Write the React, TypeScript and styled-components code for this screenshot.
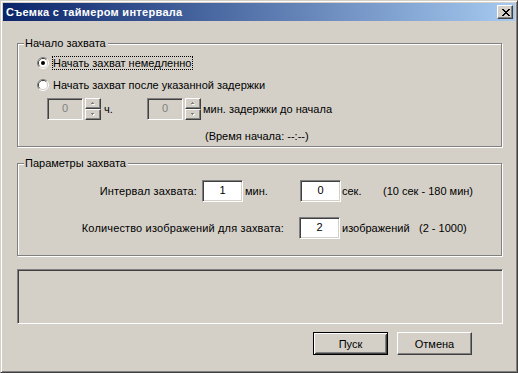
import styled, { createGlobalStyle, css } from 'styled-components';

const GlobalStyle = createGlobalStyle`
    html, body {
        margin: 0;
        padding: 0;
        background: #d4d0c8;
    }
    body {
        font-family: 'Liberation Sans', Arial, sans-serif;
        font-size: 11px;
        color: #000;
    }
`;

// classic 3D edges
const raised = css`
    border: 1px solid;
    border-color: #fff #404040 #404040 #fff;
    box-shadow: inset -1px -1px 0 #808080, inset 1px 1px 0 #d4d0c8;
`;

const sunken = css`
    border: 1px solid;
    border-color: #808080 #fff #fff #808080;
    box-shadow: inset 1px 1px 0 #404040, inset -1px -1px 0 #d4d0c8;
`;

export default function App() {
    return (
        <>
            <GlobalStyle />
            <Window>
                <TitleBar>
                    <Title>Съемка с таймером интервала</Title>
                    <CloseButton aria-label="close">
                        <svg width="8" height="7" viewBox="0 0 8 7">
                            <path
                                d="M0 0h2v1h-2zM6 0h2v1h-2zM1 1h2v1h-2zM5 1h2v1h-2zM2 2h4v1h-4zM3 3h2v1h-2zM2 4h4v1h-4zM1 5h2v1h-2zM5 5h2v1h-2zM0 6h2v1h-2zM6 6h2v1h-2z"
                                fill="#000"
                            />
                        </svg>
                    </CloseButton>
                </TitleBar>

                <Body>
                    <GroupBox $height={104} $padTop={12} $padLeft={19}>
                        <Caption>Начало захвата</Caption>
                        <RadioRow>
                            <Radio checked />
                            <RadioLabel $focused>Начать захват немедленно</RadioLabel>
                        </RadioRow>
                        <RadioRow $top={8}>
                            <Radio />
                            <RadioLabel>Начать захват после указанной задержки</RadioLabel>
                        </RadioRow>
                        <SpinRow>
                            <DisabledEdit>0</DisabledEdit>
                            <SpinButtons />
                            <UnitLabel $width={46} $pad={3}>
                                ч.
                            </UnitLabel>
                            <DisabledEdit>0</DisabledEdit>
                            <SpinButtons />
                            <UnitLabel $pad={2}>мин. задержки до начала</UnitLabel>
                        </SpinRow>
                        <StartTime>(Время начала: --:--)</StartTime>
                    </GroupBox>

                    <GroupBox $height={93} $padTop={16} $top={16}>
                        <Caption>Параметры захвата</Caption>
                        <ParamRow>
                            <FieldLabel $width={184} $gap={5}>
                                Интервал захвата:
                            </FieldLabel>
                            <NumberEdit>1</NumberEdit>
                            <UnitLabel $width={57} $pad={2}>
                                мин.
                            </UnitLabel>
                            <NumberEdit>0</NumberEdit>
                            <UnitLabel $width={42} $pad={1}>
                                сек.
                            </UnitLabel>
                            <UnitLabel>(10 сек - 180 мин)</UnitLabel>
                        </ParamRow>
                        <ParamRow $top={15}>
                            <FieldLabel $width={281} $gap={15}>
                                Количество изображений для захвата:
                            </FieldLabel>
                            <NumberEdit>2</NumberEdit>
                            <UnitLabel $width={79} $pad={2}>
                                изображений
                            </UnitLabel>
                            <UnitLabel>(2 - 1000)</UnitLabel>
                        </ParamRow>
                    </GroupBox>

                    <StatusPanel />

                    <ButtonRow>
                        <PushButton $default>Пуск</PushButton>
                        <PushButton>Отмена</PushButton>
                    </ButtonRow>
                </Body>
            </Window>
        </>
    );
}

function Radio({ checked }: { checked?: boolean }) {
    return (
        <RadioSvg width="12" height="12" viewBox="0 0 12 12">
            <path d="M2.11 9.89 A5.5 5.5 0 0 1 9.89 2.11" stroke="#808080" fill="none" />
            <path d="M9.89 2.11 A5.5 5.5 0 0 1 2.11 9.89" stroke="#fff" fill="none" />
            <path d="M2.82 9.18 A4.5 4.5 0 0 1 9.18 2.82" stroke="#404040" fill="none" />
            <path d="M9.18 2.82 A4.5 4.5 0 0 1 2.82 9.18" stroke="#d4d0c8" fill="none" />
            <circle cx="6" cy="6" r="4" fill="#fff" />
            {checked && <circle cx="6" cy="6" r="2" fill="#000" />}
        </RadioSvg>
    );
}

function SpinButtons() {
    return (
        <SpinStack>
            <SpinButton>
                <svg width="4" height="3" viewBox="0 0 4 3">
                    <path d="M2 1h1v1h-1zM1 2h3v1h-3z" fill="#fff" />
                    <path d="M1 0h1v1h-1zM0 1h3v1h-3z" fill="#808080" />
                </svg>
            </SpinButton>
            <SpinButton>
                <svg width="4" height="3" viewBox="0 0 4 3">
                    <path d="M1 1h3v1h-3zM2 2h1v1h-1z" fill="#fff" />
                    <path d="M0 0h3v1h-3zM1 1h1v1h-1z" fill="#808080" />
                </svg>
            </SpinButton>
        </SpinStack>
    );
}

const Window = styled.div`
    box-sizing: border-box;
    width: 518px;
    height: 373px;
    border: 1px solid;
    border-color: #d4d0c8 #404040 #404040 #d4d0c8;
    box-shadow: inset 1px 1px 0 #fff, inset -1px -1px 0 #808080;
    padding: 2px;
    background: #d4d0c8;
    display: flex;
    flex-direction: column;
`;

const TitleBar = styled.div`
    height: 18px;
    display: flex;
    align-items: center;
    justify-content: space-between;
    padding: 0 2px 0 3px;
    background: linear-gradient(to right, #0a246a, #a6caf0);
`;

const Title = styled.span`
    color: #fff;
    font-weight: bold;
    font-size: 11px;
    letter-spacing: 0.3px;
    line-height: 13px;
`;

const CloseButton = styled.div`
    box-sizing: border-box;
    width: 16px;
    height: 14px;
    background: #d4d0c8;
    ${raised};
    display: flex;
    align-items: center;
    justify-content: center;
    padding-left: 1px;
`;

const Body = styled.div`
    display: flex;
    flex-direction: column;
    padding: 22px 13px 0 14px;
`;

const GroupBox = styled.div<{ $height: number; $padTop: number; $padLeft?: number; $top?: number }>`
    position: relative;
    box-sizing: border-box;
    height: ${(p) => p.$height}px;
    margin-top: ${(p) => p.$top ?? 0}px;
    padding: ${(p) => p.$padTop}px 0 0 ${(p) => p.$padLeft ?? 0}px;
    border: 1px solid #808080;
    box-shadow: 1px 1px 0 #fff, inset 1px 1px 0 #fff;
`;

const Caption = styled.span`
    position: absolute;
    top: -7px;
    left: 6px;
    padding: 0 2px 0 1px;
    line-height: 13px;
    background: #d4d0c8;
`;

const RadioRow = styled.div<{ $top?: number }>`
    display: flex;
    align-items: center;
    height: 14px;
    margin-top: ${(p) => p.$top ?? 0}px;
`;

const RadioSvg = styled.svg`
    flex: none;
    display: block;
`;

const RadioLabel = styled.span<{ $focused?: boolean }>`
    margin-left: 3px;
    padding: 0 1px 0 0;
    line-height: 12px;
    white-space: nowrap;
    border: 1px dotted ${(p) => (p.$focused ? '#000' : 'transparent')};
`;

const SpinRow = styled.div`
    display: flex;
    align-items: center;
    height: 22px;
    margin-top: 6px;
    padding-left: 10px;
`;

const DisabledEdit = styled.div`
    box-sizing: border-box;
    width: 36px;
    height: 22px;
    ${sunken};
    background: #d4d0c8;
    color: #808080;
    display: flex;
    align-items: center;
    justify-content: center;
    padding-bottom: 2px;
`;

const SpinStack = styled.div`
    display: flex;
    flex-direction: column;
    margin-left: 2px;
`;

const SpinButton = styled.div`
    box-sizing: border-box;
    width: 16px;
    height: 11px;
    ${raised};
    display: flex;
    align-items: center;
    justify-content: center;
`;

const UnitLabel = styled.span<{ $width?: number; $pad?: number }>`
    box-sizing: border-box;
    flex: none;
    ${(p) => (p.$width ? `width: ${p.$width}px;` : '')}
    padding-left: ${(p) => p.$pad ?? 0}px;
    line-height: 13px;
    white-space: nowrap;
`;

const StartTime = styled.div`
    margin-top: 10px;
    padding-left: 168px;
    line-height: 13px;
`;

const ParamRow = styled.div<{ $top?: number }>`
    display: flex;
    align-items: center;
    height: 22px;
    margin-top: ${(p) => p.$top ?? 0}px;
`;

const FieldLabel = styled.span<{ $width: number; $gap: number }>`
    box-sizing: border-box;
    flex: none;
    width: ${(p) => p.$width}px;
    padding-right: ${(p) => p.$gap}px;
    text-align: right;
    letter-spacing: 0.15px;
    line-height: 13px;
    white-space: nowrap;
`;

const NumberEdit = styled.div`
    box-sizing: border-box;
    flex: none;
    width: 41px;
    height: 22px;
    ${sunken};
    background: #fff;
    display: flex;
    align-items: center;
    justify-content: center;
    padding-bottom: 2px;
`;

const StatusPanel = styled.div`
    box-sizing: border-box;
    height: 55px;
    margin: 13px -1px 0 0;
    ${sunken};
`;

const ButtonRow = styled.div`
    display: flex;
    justify-content: flex-end;
    gap: 9px;
    margin-top: 8px;
    padding-right: 30px;
`;

const PushButton = styled.button<{ $default?: boolean }>`
    box-sizing: border-box;
    width: 75px;
    height: 23px;
    padding: 0;
    font: inherit;
    color: #000;
    background: #d4d0c8;
    ${(p) =>
        p.$default
            ? css`
                  border: 1px solid #000;
                  box-shadow: inset 1px 1px 0 #fff, inset -1px -1px 0 #404040, inset 2px 2px 0 #d4d0c8,
                      inset -2px -2px 0 #808080;
              `
            : raised};
`;
